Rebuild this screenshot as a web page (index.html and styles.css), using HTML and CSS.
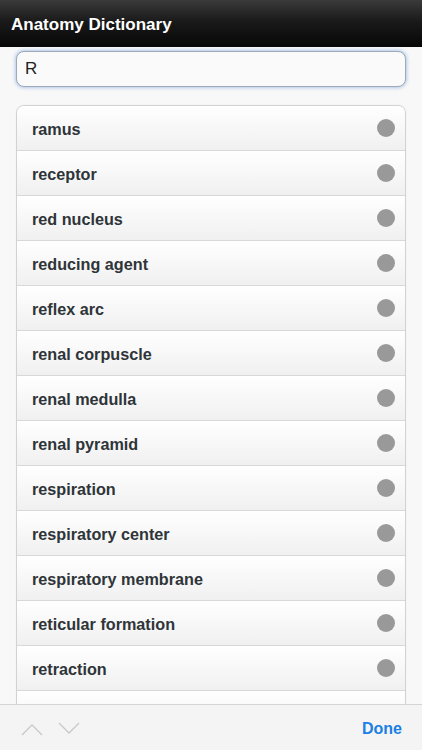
FILE: index.html
```html
<!DOCTYPE html>
<html>
<head>
<meta charset="utf-8">
<link rel="stylesheet" href="styles.css">
</head>
<body>
<header class="topbar"><h1 class="title">Anatomy Dictionary</h1></header>
<main class="content">
  <div class="search">R</div>
  <ul class="list">
    <li class="row"><span>ramus</span><i class="dot"></i></li>
    <li class="row"><span>receptor</span><i class="dot"></i></li>
    <li class="row"><span>red nucleus</span><i class="dot"></i></li>
    <li class="row"><span>reducing agent</span><i class="dot"></i></li>
    <li class="row"><span>reflex arc</span><i class="dot"></i></li>
    <li class="row"><span>renal corpuscle</span><i class="dot"></i></li>
    <li class="row"><span>renal medulla</span><i class="dot"></i></li>
    <li class="row"><span>renal pyramid</span><i class="dot"></i></li>
    <li class="row"><span>respiration</span><i class="dot"></i></li>
    <li class="row"><span>respiratory center</span><i class="dot"></i></li>
    <li class="row"><span>respiratory membrane</span><i class="dot"></i></li>
    <li class="row"><span>reticular formation</span><i class="dot"></i></li>
    <li class="row"><span>retraction</span><i class="dot"></i></li>
    <li class="row"><span>retrograde</span><i class="dot"></i></li>
  </ul>
</main>
<footer class="toolbar">
  <div class="arrows">
    <svg width="22" height="14" viewBox="0 0 22 14"><path d="M1 13 L11 3 L21 13" fill="none" stroke="#c8c8cc" stroke-width="1.3"/></svg>
    <svg width="22" height="14" viewBox="0 0 22 14"><path d="M1 1 L11 11 L21 1" fill="none" stroke="#c8c8cc" stroke-width="1.3"/></svg>
  </div>
  <span class="done">Done</span>
</footer>
</body>
</html>
```
FILE: styles.css
```css
html, body {
  margin: 0;
  padding: 0;
  height: 750px;
  overflow: hidden;
  background: #f8f8f8;
  font-family: "Liberation Sans", Arial, sans-serif;
}
.topbar {
  height: 47px;
  background: linear-gradient(#3a3a3a, #1a1a1a 45%, #070707);
  display: flex;
  align-items: center;
  padding-left: 11px;
  box-sizing: border-box;
}
.title {
  margin: 0;
  color: #fff;
  font-size: 17px;
  font-weight: bold;
  padding-top: 2px;
}
.content {
  padding: 4px 16px 0;
}
.search {
  height: 36px;
  box-sizing: border-box;
  border: 1px solid #9fa9b8;
  border-radius: 8px;
  background: #fafafa;
  box-shadow: 0 0 4px #8ab0e0;
  padding-left: 8px;
  display: flex;
  align-items: center;
  font-size: 17px;
  color: #222;
}
.list {
  list-style: none;
  margin: 18px 0 0;
  padding: 0;
  border: 1px solid #d2d2d2;
  border-radius: 8px;
  overflow: hidden;
  background: #fff;
  box-shadow: 0 0 2px rgba(0,0,0,0.06);
}
.row {
  height: 45px;
  box-sizing: border-box;
  border-top: 1px solid #d8d8d8;
  background: linear-gradient(#ffffff, #f0f0f0);
  display: flex;
  align-items: center;
  justify-content: space-between;
  padding: 2px 10px 0 15px;
  font-size: 16.2px;
  font-weight: bold;
  color: #2f3438;
}
.row:first-child { border-top: none; height: 44px; }
.dot {
  width: 18px;
  height: 18px;
  border-radius: 50%;
  background: #999;
  margin-top: -2px;
}
.toolbar {
  position: fixed;
  left: 0;
  right: 0;
  bottom: 0;
  height: 46px;
  box-sizing: border-box;
  background: #f4f4f5;
  border-top: 1px solid #d4d4d6;
  display: flex;
  align-items: center;
  justify-content: space-between;
  padding: 0 20px 0 21px;
}
.arrows {
  display: flex;
  gap: 15px;
  padding-top: 2px;
}
.done {
  color: #1b7fe3;
  font-size: 16px;
  font-weight: bold;
  padding-top: 3px;
}
```
